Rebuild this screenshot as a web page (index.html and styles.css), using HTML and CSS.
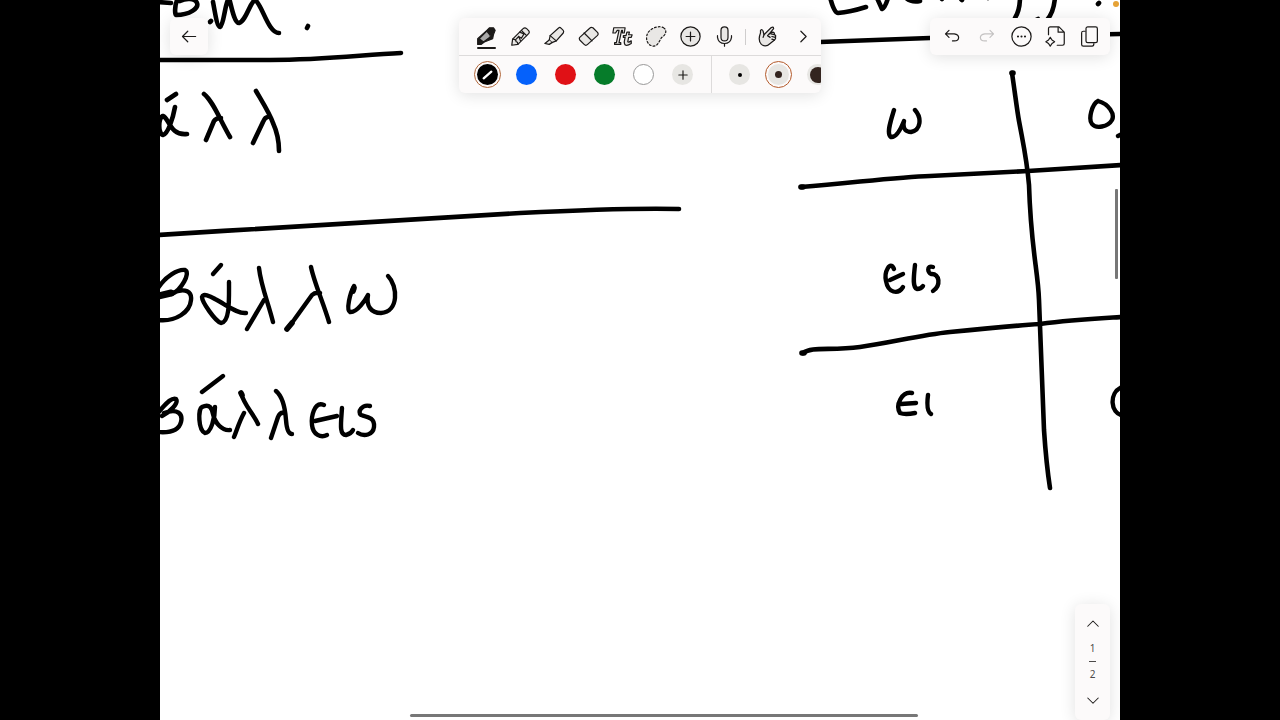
FILE: index.html
```html
<!DOCTYPE html>
<html lang="en">
<head>
<meta charset="utf-8">
<meta name="viewport" content="width=device-width, initial-scale=1">
<title>Notes</title>
<link rel="stylesheet" href="styles.css">
</head>
<body>
<main class="notebook">
  <svg class="ink" viewBox="160 0 960 720" preserveAspectRatio="xMidYMid slice" role="img" aria-label="Handwritten Greek verb endings">
    <!-- left heading -->
    <path d="M158 2L171 3M178 -2C174 6 175 15 176 15C190 15 199 8 197 3C195 -2 186 -2 180 1M210 22L211 21M213 2C215 12 217 27 220 27C224 25 225 2 229 -2C231 4 234 23 239 23C246 21 250 2 255 0C262 4 268 33 279 33M307 28L308 26"/>
    <path d="M158 60L270 60C325 60 360 55 401 53"/>
    <path d="M167 100L176 94M175 107C173 118 168 134 163 135C158 134 158 118 163 116C169 118 170 136 187 134"/>
    <path d="M204 94C213 101 220 120 230 137M221 118Q216 118 214 121L206 140M256 91C263 103 270 114 273 123Q279 136 279 151M268 117Q265 117 263 122L253 143"/>
    <path d="M158 235C300 226 460 217 520 213C600 209 640 208 679 209"/>
    <!-- first form -->
    <path class="fine" d="M158 288C166 276 178 269 185 270C191 273 181 290 172 294M172 293C186 287 192 292 191 300C190 312 176 322 158 320"/>
    <path class="heavy" d="M158 296L171 293"/>
    <path class="fine" d="M213 274L221 265M229 282C229 300 230 322 221 323C215 321 202 302 202 297C203 293 210 296 215 299C228 306 238 314 246 313"/>
    <path class="fine" d="M259 268C261 286 268 302 273 322M264 300L247 329M311 267C314 282 323 302 329 322M320 293Q315 292 312 295L294 320L287 329"/>
    <path class="knot" d="M287 329L292 323"/>
    <path class="fine" d="M354 286C350 293 346 310 350 312C357 313 366 299 368 295C366 306 371 313 381 313C399 312 398 286 388 276"/>
    <path class="knot" d="M354 288L353 291"/>
    <!-- second form -->
    <path class="fine" d="M158 413C164 405 172 397 176 399C179 403 170 412 162 416M164 413C178 408 183 414 181 422C179 430 170 433 158 432M202 392L223 376"/>
    <path class="fine" d="M215 407C215 418 211 433 205 433C198 430 198 409 202 407C210 403 212 409 213 414C215 423 222 431 230 430"/>
    <path class="fine" d="M241 393C244 405 253 413 258 424M244 413C239 422 237 430 234 437M276 391C282 396 285 406 286 420Q287 434 292 434M284 413Q280 412 278 417L271 438"/>
    <path class="knot" d="M241 393L242 395"/>
    <path class="fine" d="M324 405C314 401 311 417 312 425C313 435 321 438 327 435M315 421L337 416M342 408C341 423 339 435 346 435Q351 434 353 430M370 406C362 404 357 412 361 415C368 417 375 418 374 427C373 435 364 437 358 433"/>
    <!-- endings heading -->
    <path d="M830 -3Q834 13 838 13Q850 12 866 7M877 -2L882 9Q885 8 888 -2M905 -3Q911 3 920 1M941 -2L942 -1M961 -1L962 0M987 -3L988 -2M1020 -3Q1020 10 1015 18M1055 -3Q1054 12 1047 20M1036 20L1038 19M1098 4L1099 3"/>
    <path d="M820 42L930 38L1122 34"/>
    <!-- endings table -->
    <path d="M801 187C860 182 900 177 930 176L1028 171L1122 165"/>
    <path d="M803 353C812 346 830 351 860 347C890 343 920 335 950 332C990 328 1010 326 1040 324C1070 320 1090 319 1122 317"/>
    <path d="M1012 73C1015 93 1017 110 1019 121C1026 158 1027 161 1029 185C1031 250 1038 270 1039 300C1041 360 1043 400 1044 430C1046 460 1048 475 1050 488"/>
    <path class="knot" d="M801 187L803 187M802 353L804 353M1012 73L1013 73"/>
    <path class="fine" d="M894 110C891 120 886 134 891 137C897 138 902 126 904 121C902 130 907 132 911 132C921 130 922 118 915 110M1098 101C1092 104 1088 119 1092 124C1096 129 1108 127 1112 120C1115 114 1109 104 1098 101M1118 136L1122 134"/>
    <path class="fine" d="M894 269C890 260 884 272 886 281C888 293 898 295 903 287M890 280L903 274M915 265C914 275 912 287 917 289Q921 289 923 286M933 267C926 265 928 273 931 274C940 273 941 286 933 291"/>
    <path class="fine" d="M912 393C902 391 895 405 900 413Q905 415 915 413M901 404L916 403M928 395C927 403 927 412 931 414M1122 387C1108 393 1111 414 1122 415"/>
    <circle class="highlight" cx="1116" cy="4" r="3"/>
  </svg>

  <button class="panel back" aria-label="Back">
    <svg class="icon" viewBox="0 0 24 24"><path d="M19 12H4M10 6L4 12L10 18"/></svg>
  </button>

  <div class="panel tools">
    <div class="tool-row" role="toolbar" aria-label="Tools">
      <button class="tool active" aria-label="Pen"><svg class="icon" viewBox="0 0 24 24"><path class="solid" d="M2 21L2 14L13 4L16 1L21 1L23 4L21 9L20 14L10 18L6 21Z"/><path class="steel" d="M4 14L13 5L17 10L17 12L9 18Z"/><path class="steel" d="M18 4L20 5"/></svg></button>
      <button class="tool" aria-label="Pencil"><svg class="icon" viewBox="0 0 24 24"><path class="soft" d="M2 22L3 15L15 3Q17 1 19 3L21 5Q23 7 21 9L9 21Z"/><path d="M3 15Q7 15 7 18Q9 18 9 21M13 5L19 11M7 15L10 12L13 14L16 9L11 7M10 12L12 17"/></svg></button>
      <button class="tool" aria-label="Highlighter"><svg class="icon" viewBox="0 0 24 24"><path class="soft" d="M7 11L17 2Q18 1 20 3L22 5Q23 6 22 8L14 17L9 19L6 16Z"/><path class="soft" d="M6 16L1 20L6 21L9 19"/><path d="M7 11L14 17"/></svg></button>
      <button class="tool" aria-label="Eraser"><svg class="icon" viewBox="0 0 24 24"><path class="soft" d="M2 13L14 2Q15 1 17 2L22 7Q24 9 22 11L11 21Q9 23 7 21L2 16Q1 14 2 13Z"/><path d="M7 8L16 17"/></svg></button>
      <button class="tool" aria-label="Text"><svg class="icon" viewBox="0 0 24 24"><path class="soft" d="M2 2H15L14 8H12L12 5H11L8 19H10V21H3V19H5L8 5H6L4 8H1Z"/><path class="soft" d="M17 7H20L19 10H23L22 13H19L18 18Q19 19 22 17V20Q14 25 14 18L15 13H13V11H16Z"/></svg></button>
      <button class="tool" aria-label="Lasso"><svg class="icon" viewBox="0 0 24 24"><path class="soft dashed" d="M20 2C25 5 22 11 18 13C15 17 14 23 8 23C1 22 -1 14 2 8C6 2 15 -1 20 2Z"/></svg></button>
      <button class="tool" aria-label="Insert"><svg class="icon" viewBox="0 0 24 24"><circle class="soft" cx="12" cy="12" r="11"/><path d="M12 7V17M7 12H17"/></svg></button>
      <button class="tool" aria-label="Record"><svg class="icon" viewBox="0 0 24 24"><rect class="soft" x="8" y="1" width="8" height="16" rx="4"/><path d="M4 11V13Q5 20 12 20Q19 20 20 13V11M12 20V23"/></svg></button>
      <span class="tool-divider"></span>
      <button class="tool" aria-label="Touch mode"><svg class="icon" viewBox="0 0 24 24"><path class="soft" d="M5 21C1 17 2 13 4 8V5Q6 3 7 6L8 10L16 2Q19 0 19 3L14 9L18 7Q20 7 20 10Q22 10 21 13Q22 14 20 16L15 20Q10 25 5 21Z"/><path d="M8 10L7 13M14 9L12 11L15 13M20 10L16 9M21 13L17 12M20 16L17 15"/></svg></button>
      <button class="tool last" aria-label="More tools"><svg class="icon" viewBox="0 0 24 24"><path d="M9 6L15 12L9 18"/></svg></button>
    </div>
    <div class="tool-row options" role="toolbar" aria-label="Colours and stroke width">
      <button class="option" aria-label="Black"><span class="swatch black ring"><svg class="mark" viewBox="0 0 22 22"><path d="M7 15L15 8"/></svg></span></button>
      <button class="option" aria-label="Blue"><span class="swatch blue"></span></button>
      <button class="option" aria-label="Red"><span class="swatch red"></span></button>
      <button class="option" aria-label="Green"><span class="swatch green"></span></button>
      <button class="option" aria-label="White"><span class="swatch white"></span></button>
      <button class="option" aria-label="Add colour"><span class="swatch grey"><svg class="icon" viewBox="0 0 24 24"><path d="M12 7V17M7 12H17"/></svg></span></button>
      <span class="option-divider"></span>
      <button class="option" aria-label="Thin"><span class="swatch grey"><span class="dot thin"></span></span></button>
      <button class="option" aria-label="Medium"><span class="swatch grey ring"><span class="dot medium"></span></span></button>
      <button class="option" aria-label="Thick"><span class="swatch grey"><span class="dot thick"></span></span></button>
    </div>
  </div>

  <div class="panel actions" role="toolbar" aria-label="Page actions">
    <button class="action" aria-label="Undo"><svg class="icon" viewBox="0 0 24 24"><path d="M8 5L4 9L8 13M4 9H14Q19 10 19 13Q19 17 14 17H12"/></svg></button>
    <button class="action" aria-label="Redo" disabled><svg class="icon" viewBox="0 0 24 24"><path d="M16 5L20 9L16 13M20 9H10Q5 10 5 13Q5 17 10 17H12"/></svg></button>
    <button class="action" aria-label="More"><svg class="icon" viewBox="0 0 24 24"><circle cx="12" cy="12" r="11"/><path class="dots" d="M8 12H8.01M12 12H12.01M16 12H16.01"/></svg></button>
    <button class="action" aria-label="New page"><svg class="icon" viewBox="0 0 24 24"><path d="M4 10V3Q4 1 6 1H16L22 7V20Q22 22 20 22H14M15 1V7H22M6 13L8 16L11 18L8 20L6 23L4 20L1 18L4 16Z"/></svg></button>
    <button class="action" aria-label="Pages"><svg class="icon" viewBox="0 0 24 24"><rect x="8" y="1" width="13" height="18" rx="2"/><path d="M7 6H5Q3 6 3 8V21Q3 23 5 23H15Q17 23 17 20"/></svg></button>
  </div>

  <nav class="panel pager" aria-label="Pages">
    <button class="page-step" aria-label="Previous page"><svg class="icon" viewBox="0 0 24 24"><path d="M5 15L12 8L19 15"/></svg></button>
    <div class="page-count"><span>1</span><span class="page-line"></span><span>2</span></div>
    <button class="page-step" aria-label="Next page"><svg class="icon" viewBox="0 0 24 24"><path d="M5 8L12 15L19 8"/></svg></button>
  </nav>

  <div class="scroll-y"></div>
  <div class="scroll-x"></div>
</main>
</body>
</html>
```

FILE: styles.css
```css
* { box-sizing: border-box; }

body {
  margin: 0;
  background: #000;
  font-family: "Noto Sans", sans-serif;
}

button {
  display: flex;
  align-items: center;
  justify-content: center;
  flex: none;
  margin: 0;
  padding: 0;
  border: 0;
  background: none;
  color: #1c1a19;
}

.notebook {
  position: relative;
  width: 75%;
  height: 100vh;
  margin: 0 auto;
  overflow: hidden;
  background: #fff;
}

.ink {
  display: block;
  width: 100%;
  height: 100%;
  fill: none;
  stroke: #000;
  stroke-width: 4.6;
  stroke-linecap: round;
  stroke-linejoin: round;
}
.fine { stroke-width: 4.4; }
.knot { stroke-width: 5.6; }
.heavy { stroke-width: 7; }
.highlight { fill: #e5a236; stroke: none; }

.panel {
  position: absolute;
  background: #fcfafa;
  border-radius: 6px;
  box-shadow: 0 2px 16px rgba(0, 0, 0, 0.12);
}

.icon {
  display: block;
  width: 21px;
  height: 21px;
  fill: none;
  stroke: currentColor;
  stroke-width: 1.4;
  stroke-linecap: round;
  stroke-linejoin: round;
}
.soft { fill: #e9e7e5; }
.solid { fill: #1c1a19; }
.steel { fill: #aaa9a9; }
.dashed { stroke-dasharray: 2 2.4; }
.dots { stroke-width: 2.4; }

.back {
  top: 18px;
  left: 10px;
  width: 38px;
  height: 37px;
}

.tools {
  top: 18px;
  left: 50%;
  width: 362px;
  transform: translateX(-50%);
  overflow: hidden;
}
.tool-row {
  display: flex;
  align-items: center;
  height: 37px;
  padding-left: 10px;
}
.options {
  height: 38px;
  padding-left: 9px;
  border-top: 1px solid #dddbdb;
}
.tool {
  position: relative;
  width: 34px;
  height: 37px;
}
.active::after {
  content: "";
  position: absolute;
  bottom: 6px;
  width: 19px;
  height: 2px;
  border-radius: 1px;
  background: #1c1a19;
}
.active .icon {
  width: 20px;
  height: 20px;
}
.tool-divider {
  width: 1px;
  height: 16px;
  margin: 0 4px;
  background: #cfcdcd;
}
.last { margin-left: 2px; }

.option {
  width: 39px;
  height: 37px;
}
.option-divider {
  flex: none;
  width: 1px;
  height: 37px;
  margin: 0 8px 0 9px;
  background: #dddbdb;
}
.swatch {
  display: flex;
  align-items: center;
  justify-content: center;
  width: 21px;
  height: 21px;
  border-radius: 50%;
}
.swatch .icon { width: 20px; height: 20px; }
.black { background: #000; }
.blue { background: #0561fb; }
.red { background: #e01116; }
.green { background: #067c2a; }
.white { background: #fff; border: 1px solid #999; }
.grey { background: #e7e6e3; }
.ring { outline: 1px solid #b0673a; outline-offset: 2px; }
.grey.ring { outline-color: #b35a2b; }
.mark {
  width: 21px;
  height: 21px;
  fill: none;
  stroke: #fff;
  stroke-width: 2.4;
  stroke-linecap: round;
}
.dot {
  border-radius: 50%;
  background: #33241f;
}
.thin { width: 4px; height: 4px; background: #000; }
.medium { width: 7px; height: 7px; }
.thick { width: 16px; height: 16px; }

.actions {
  display: flex;
  top: 18px;
  right: 10px;
  width: 180px;
  height: 37px;
  padding: 0 3px 0 5px;
}
.action { flex: 1; }
.action:disabled { color: #c4c2c2; }

.pager {
  right: 10px;
  bottom: 0;
  display: flex;
  flex-direction: column;
  align-items: center;
  width: 35px;
  padding: 8px 0;
}
.page-step { width: 35px; height: 23px; }
.page-step .icon { width: 18px; height: 18px; }
.page-count {
  display: flex;
  flex-direction: column;
  align-items: center;
  gap: 4px;
  padding: 5px 0 6px;
  font-size: 10px;
  line-height: 17px;
  color: #4c4a49;
}
.page-line {
  width: 7px;
  height: 1px;
  background: #4c4a49;
}

.scroll-y {
  position: absolute;
  top: 189px;
  right: 2px;
  width: 3px;
  height: 90px;
  border-radius: 1px;
  background: #777;
}
.scroll-x {
  position: absolute;
  left: 26%;
  bottom: 3px;
  width: 53%;
  height: 3px;
  border-radius: 2px;
  background: #777;
}
```
